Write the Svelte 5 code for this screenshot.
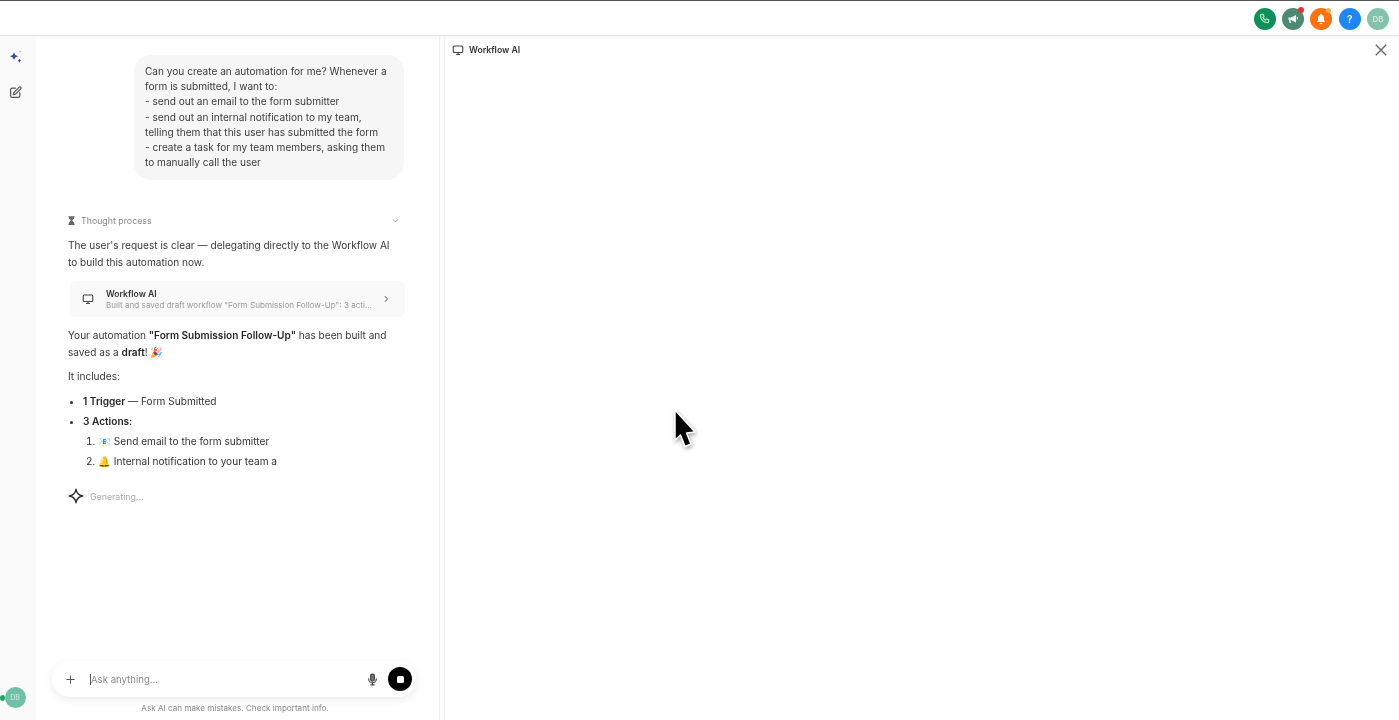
<script lang="ts">
  const request = [
    "Can you create an automation for me? Whenever a form is submitted, I want to:",
    "- send out an email to the form submitter",
    "- send out an internal notification to my team, telling them that this user has submitted the form",
    "- create a task for my team members, asking them to manually call the user"
  ];
</script>

<div class="page">
  <header class="topbar">
    <div class="round green">
      <svg width="11" height="11" viewBox="0 0 24 24" fill="none" stroke="#9fe0bf" stroke-width="3" stroke-linecap="round" stroke-linejoin="round"><path d="M5 3h4l2 5-2.5 1.8a12 12 0 0 0 5.7 5.7L16 13l5 2v4a2 2 0 0 1-2 2A16 16 0 0 1 3 5a2 2 0 0 1 2-2z" /></svg>
    </div>
    <div class="round slate">
      <svg width="12" height="12" viewBox="0 0 24 24" fill="#f2f6f4"><path d="M3 9h5l10-5v15L8 14H7l1 6H5l-1-6H3z" /><rect x="19.5" y="8" width="2.5" height="5" /></svg>
      <span class="dot"></span>
    </div>
    <div class="round orange">
      <svg width="12" height="12" viewBox="0 0 24 24" fill="#fff"><path d="M12 2a2 2 0 0 1 2 2c3 1 4 3.500 4 6.500V15l2.500 3h-17L6 15v-4.500C6 7.500 7 5 10 4a2 2 0 0 1 2-2z" /><path d="M9.500 20h5a2.500 2.500 0 0 1-5 0z" /></svg>
      <span class="glint"></span>
    </div>
    <div class="round blue">?</div>
    <div class="round avatar">DB</div>
  </header>

  <div class="body">
    <nav class="rail">
      <div class="rail-top">
        <svg class="sparkles" width="14" height="14" viewBox="0 0 14 14" fill="#3f4a9c"><path d="M5 3.500 6.300 6 9 7.200 6.300 8.400 5 11 3.700 8.400 1 7.200 3.700 6z" /><path d="M10.500 9.500 11.200 11 12.600 11.700 11.200 12.300 10.500 13.700 9.800 12.300 8.400 11.700 9.800 11z" /><circle cx="11" cy="2.500" r=".7" fill="#9aa0c8" /></svg>
        <svg width="13" height="13" viewBox="0 0 24 24" fill="none" stroke="#555" stroke-width="2.200" stroke-linecap="round" stroke-linejoin="round"><path d="M12 4H6a3 3 0 0 0-3 3v11a3 3 0 0 0 3 3h11a3 3 0 0 0 3-3v-6" /><path d="M18.500 2.500a2.100 2.100 0 0 1 3 3L12 15l-4 1 1-4z" /></svg>
      </div>
      <div class="rail-user"><span class="online"></span><span class="rail-avatar">DB</span></div>
    </nav>

    <section class="chat">
      <div class="thread">
        <div class="bubble">
          {#each request as line}
            <div>{line}</div>
          {/each}
        </div>

        <div class="thought">
          <span class="thought-label">
            <svg width="7" height="9" viewBox="0 0 8 10" fill="#666"><path d="M.5 0h7v1.200H7V2.500L4.800 5 7 7.500v1.300h.5V10h-7V8.800H1V7.500L3.200 5 1 2.500V1.200H.5z" /></svg>
            Thought process
          </span>
          <svg class="thought-chevron" width="7" height="7" viewBox="0 0 10 10" fill="none" stroke="#999" stroke-width="1.300"><path d="M1.500 3.500 5 7l3.500-3.500" /></svg>
        </div>

        <p class="para first">The user's request is clear — delegating directly to the Workflow AI to build this automation now.</p>

        <div class="tool-card">
          <svg class="monitor" width="12" height="12" viewBox="0 0 24 24" fill="none" stroke="#444" stroke-width="2.200" stroke-linecap="round" stroke-linejoin="round"><rect x="2.500" y="4" width="19" height="13" rx="2" /><path d="M9 21h6M12 17v4" /></svg>
          <div class="tool-text">
            <div class="tool-title">Workflow AI</div>
            <div class="tool-sub">Built and saved draft workflow "Form Submission Follow-Up": 3 acti...</div>
          </div>
          <svg width="8" height="8" viewBox="0 0 10 10" fill="none" stroke="#888" stroke-width="1.400"><path d="M3.500 1.500 7 5 3.500 8.500" /></svg>
        </div>

        <p class="para built">Your automation <b>"Form Submission Follow-Up"</b> has been built and saved as a <b>draft</b>! 🎉</p>
        <p class="para includes">It includes:</p>

        <ul class="summary">
          <li><b>1 Trigger</b> — Form Submitted</li>
          <li>
            <b>3 Actions:</b>
            <ol>
              <li>📧 Send email to the form submitter</li>
              <li>🔔 Internal notification to your team a</li>
            </ol>
          </li>
        </ul>

        <div class="generating">
          <svg width="16" height="16" viewBox="0 0 24 24" fill="none" stroke="#333" stroke-width="2.200" stroke-linejoin="round"><path d="M12 2c1 6 4 9 10 10-6 1-9 4-10 10-1-6-4-9-10-10 6-1 9-4 10-10z" /></svg>
          <span>Generating...</span>
        </div>
      </div>

      <div class="composer-wrap">
        <div class="composer">
          <svg width="11" height="11" viewBox="0 0 12 12" stroke="#555" stroke-width="1.100"><path d="M6 1.500v9M1.500 6h9" /></svg>
          <span class="caret"></span>
          <span class="placeholder">Ask anything...</span>
          <svg class="mic" width="13" height="13" viewBox="0 0 24 24" fill="none" stroke="#444" stroke-width="2.200" stroke-linecap="round"><rect x="8.500" y="2" width="7" height="13" rx="3.500" fill="#777" /><path d="M5 11a7 7 0 0 0 14 0M12 18v4M9 22h6" /></svg>
          <button class="stop" aria-label="Stop"><span></span></button>
        </div>
        <div class="disclaimer">Ask AI can make mistakes. Check important info.</div>
      </div>
    </section>

    <main class="panel">
      <div class="panel-head">
        <div class="panel-title">
          <svg width="12" height="12" viewBox="0 0 24 24" fill="none" stroke="#444" stroke-width="2.200" stroke-linecap="round" stroke-linejoin="round"><rect x="2.500" y="4" width="19" height="13" rx="2" /><path d="M9 21h6M12 17v4" /></svg>
          Workflow AI
        </div>
        <svg class="close" width="12" height="12" viewBox="0 0 12 12" stroke="#666" stroke-width="1.300"><path d="M.8.800l10.400 10.400M11.200.800.800 11.200" /></svg>
      </div>
    </main>
  </div>

  <svg class="cursor" width="26" height="42" viewBox="0 0 26 42">
    <path d="M4 2 24 24 15.500 25 20 36 14 38.500 9.500 27 4 32z" fill="#000" stroke="#fff" stroke-width="1.500" stroke-linejoin="round" />
  </svg>
</div>

<style>
  :global(body) {
    margin: 0;
    background: #fff;
  }

  .page {
    position: relative;
    width: 1399px;
    height: 720px;
    overflow: hidden;
    display: flex;
    flex-direction: column;
    font-family: Inter, "Liberation Sans", sans-serif;
    font-size: 10.100px;
    color: #333;
    background: #fff;
    filter: blur(0.35px);
  }

  .topbar {
    flex: none;
    height: 36px;
    box-sizing: border-box;
    border-top: 1px solid #555;
    border-bottom: 1px solid #e6e6e6;
    box-shadow: 0 1px 2px rgb(0 0 0 / 0.05);
    display: flex;
    align-items: center;
    justify-content: flex-end;
    gap: 6.300px;
    padding: 1px 10px 0 0;
  }

  .round {
    position: relative;
    width: 22px;
    height: 22px;
    border-radius: 50%;
    display: flex;
    align-items: center;
    justify-content: center;
    color: #fff;
    font-size: 9px;
    font-weight: 600;
  }

  .green { background: #0f9058; }
  .slate { background: #4c8a74; }
  .orange { background: #f97316; }
  .blue { background: #1f86f2; font-size: 10px; }
  .avatar { background: #84c2ac; color: #cfe6dd; font-size: 8px; }

  .dot {
    position: absolute;
    top: -1px;
    right: 0;
    width: 6px;
    height: 6px;
    border-radius: 50%;
    background: #e5342e;
  }

  .glint {
    position: absolute;
    top: 0;
    right: 1px;
    width: 5px;
    height: 5px;
    border-radius: 50%;
    background: #f7b04c;
  }

  .body {
    flex: 1;
    min-height: 0;
    display: flex;
  }

  .rail {
    flex: none;
    width: 36px;
    background: #fafafa;
    display: flex;
    flex-direction: column;
    justify-content: space-between;
    align-items: center;
  }

  .rail-top {
    display: flex;
    flex-direction: column;
    align-items: center;
    gap: 23px;
    padding-top: 13px;
    margin-left: -5px;
  }

  .rail-user {
    position: relative;
    margin: 0 0 12px -6px;
  }

  .rail-avatar {
    display: flex;
    width: 21px;
    height: 21px;
    border-radius: 50%;
    background: #6fbfa9;
    color: #cfe8df;
    font-size: 7px;
    align-items: center;
    justify-content: center;
  }

  .online {
    position: absolute;
    left: -5px;
    top: 8px;
    width: 5px;
    height: 6px;
    border-radius: 50%;
    background: #1aa866;
  }

  .chat {
    flex: none;
    width: 404px;
    box-sizing: border-box;
    border-right: 1px solid #f1f1f1;
    display: flex;
    flex-direction: column;
    justify-content: space-between;
    padding-top: 19px;
  }

  .thread {
    display: flex;
    flex-direction: column;
    padding: 0 32px 0 32px;
  }

  .bubble {
    align-self: flex-end;
    width: 270px;
    margin-right: 3px;
    box-sizing: border-box;
    padding: 9px 12px 10px 11px;
    background: #f6f6f6;
    border-radius: 17px;
    line-height: 15.200px;
    color: #3c3c3c;
  }

  .thought {
    display: flex;
    align-items: center;
    justify-content: space-between;
    margin-top: 33px;
    height: 14px;
  }

  .thought-label {
    display: flex;
    align-items: center;
    gap: 6px;
    font-size: 8.800px;
    color: #888;
  }

  .thought-chevron {
    margin-right: 8px;
  }

  .para {
    margin: 0;
    line-height: 17px;
    color: #3a3a3a;
    width: 330px;
  }

  .para b, .summary b {
    color: #262626;
    font-weight: 600;
  }

  .first {
    margin-top: 10px;
  }

  .tool-card {
    margin: 10px 2px 0 2px;
    height: 36px;
    box-sizing: border-box;
    background: #f9f9f9;
    border-radius: 6px;
    display: flex;
    align-items: center;
    padding: 0 15px 0 12px;
    gap: 8px;
  }

  .monitor {
    flex: none;
    margin-right: 4px;
  }

  .tool-text {
    flex: 1;
    min-width: 0;
  }

  .tool-title {
    font-size: 8.600px;
    font-weight: 600;
    color: #333;
    line-height: 12px;
  }

  .tool-sub {
    font-size: 8.100px;
    color: #999;
    line-height: 10px;
    white-space: nowrap;
  }

  .built {
    margin-top: 10px;
  }

  .includes {
    margin-top: 7px;
  }

  .summary {
    margin: 6px 0 0;
    padding: 0 0 0 15px;
    line-height: 20px;
    list-style: disc;
  }

  .summary ol {
    margin: 0;
    padding: 0 0 0 15px;
  }

  .generating {
    display: flex;
    align-items: center;
    gap: 6px;
    margin-top: 17px;
    font-size: 8.800px;
    color: #aaa;
  }

  .composer-wrap {
    padding: 0 23px 7px 16px;
  }

  .composer {
    height: 36px;
    box-sizing: border-box;
    border-radius: 18px;
    background: #fff;
    box-shadow: 0 3px 10px rgb(0 0 0 / 0.08);
    display: flex;
    align-items: center;
    padding: 0 4px 0 13px;
  }

  .caret {
    width: 1px;
    height: 11px;
    margin-left: 14px;
    background: #555;
  }

  .placeholder {
    flex: 1;
    font-size: 9.600px;
    color: #888;
  }

  .mic {
    margin-right: 9px;
  }

  .stop {
    width: 24px;
    height: 24px;
    padding: 0;
    border: 0;
    border-radius: 50%;
    background: #000;
    display: flex;
    align-items: center;
    justify-content: center;
  }

  .stop span {
    width: 7px;
    height: 7px;
    border-radius: 1.500px;
    background: #fff;
  }

  .disclaimer {
    margin-top: 6px;
    padding-left: 2px;
    text-align: center;
    font-size: 8.150px;
    color: #888;
  }

  .panel {
    flex: 1;
    min-width: 0;
    margin-left: 4px;
    border-left: 1px solid #f3f3f3;
  }

  .panel-head {
    display: flex;
    align-items: center;
    justify-content: space-between;
    padding: 8px 12px 0 7px;
  }

  .panel-title {
    display: flex;
    align-items: center;
    gap: 5px;
    font-size: 8.700px;
    font-weight: 600;
    color: #333;
  }

  .cursor {
    position: absolute;
    left: 671px;
    top: 408px;
    filter: drop-shadow(1px 2px 2px rgb(0 0 0 / 0.35));
  }
</style>
